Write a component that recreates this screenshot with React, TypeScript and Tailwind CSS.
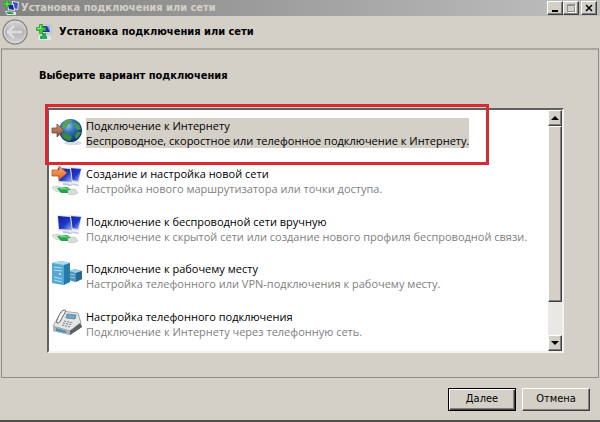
import type { ReactNode } from "react";

const raised =
  "bg-[#d4d0c8] border border-t-white border-l-white border-r-[#404040] border-b-[#404040] shadow-[inset_-1px_-1px_0_#808080]";

function Globe() {
  return (
    <svg viewBox="0 0 32 28" className="h-7 w-8 shrink-0" aria-hidden="true">
      <defs>
        <radialGradient id="globe" cx="0.4" cy="0.3" r="0.75">
          <stop offset="0" stopColor="#8ac4ea" />
          <stop offset="0.4" stopColor="#2d6fb8" />
          <stop offset="1" stopColor="#0c2c6c" />
        </radialGradient>
        <linearGradient id="brown" x1="0" y1="0" x2="0" y2="1">
          <stop offset="0" stopColor="#d09a80" />
          <stop offset="1" stopColor="#8c4a30" />
        </linearGradient>
      </defs>
      <ellipse cx="22" cy="25" rx="9" ry="2" fill="#d8dce0" />
      <circle cx="19.500" cy="12.500" r="11.500" fill="url(#globe)" />
      <path d="M13 4c2-2 6-3 8-2l-1 3-3 1-1 3-4 2-2-1z" fill="#57a05a" />
      <path d="M24 4l4 3 2 4-3 1-3-2-1-3z" fill="#4b9458" />
      <path d="M12 15l6 1 3 3-2 4-4-1-4-4z" fill="#378a3e" />
      <path d="M26 14l4 0-2 4-3 3-1-3z" fill="#3f914a" />
      <path d="M1 10h5V6l7 6.500L6 19v-4H1z" fill="url(#brown)" stroke="#7c4732" strokeWidth="0.800" />
    </svg>
  );
}

function Monitors({ arrow = false }: { arrow?: boolean }) {
  return (
    <svg viewBox="0 0 32 32" className="h-8 w-8 shrink-0" aria-hidden="true">
      <defs>
        <linearGradient id="screen" x1="0" y1="0" x2="1" y2="1">
          <stop offset="0" stopColor="#0c1c9c" />
          <stop offset="0.550" stopColor="#2038c8" />
          <stop offset="1" stopColor="#a8bcf4" />
        </linearGradient>
        <linearGradient id="orange" x1="0" y1="0" x2="0" y2="1">
          <stop offset="0" stopColor="#ffb070" />
          <stop offset="1" stopColor="#e0641c" />
        </linearGradient>
      </defs>
      <path d="M18 1l13 1-3 15-8-1z" fill="#d9dfe8" />
      <path d="M18 2l12 1-3 12-7-1z" fill="url(#screen)" />
      <path d="M20 17l7 1 1 2-8-1z" fill="#c9ced6" />
      <path d="M6 1l14 1 2 16-15-1z" fill="#e3e8ef" />
      <path d="M7 2l12 1 2 13-13-1z" fill="url(#screen)" />
      <path d="M12 17l7 1 2 2-9-1z" fill="#bcc4cf" />
      <path d="M1 21l6-1 5 3-2 3-6-1z" fill="#dce2df" stroke="#b3bcb6" strokeWidth="0.500" />
      <path d="M6 22l10-1 5 3-2 3-9 0z" fill="#22a547" />
      <path d="M8 22l8 0 2 1.500-8 0z" fill="#6cd486" />
      <path d="M17 24l7-1 3 4-5 2-5-1z" fill="#d5dcda" stroke="#aab3b0" strokeWidth="0.500" />
      {arrow && <path d="M1 4h7V0l8 7-8 7v-4H1z" fill="url(#orange)" stroke="#a8592c" strokeWidth="0.800" />}
    </svg>
  );
}

function Servers() {
  return (
    <svg viewBox="0 0 32 28" className="h-7 w-8 shrink-0" aria-hidden="true">
      <path d="M18 10l6-2 7 2v8l-7 3-6-2z" fill="#4a93bb" />
      <path d="M18 10l6-2 7 2-6 2z" fill="#9bd0e6" />
      <path d="M25 12l6-2v8l-6 3z" fill="#27688f" />
      <path d="M19 13l5 1M19 16l5 1" stroke="#a7d6e9" strokeWidth="0.800" />
      <path d="M1 2l9-2 9 2v19l-7 3-11-2z" fill="#55a9d2" />
      <path d="M1 2l9-2 9 2-6 2z" fill="#a9dcef" />
      <path d="M13 4l6-2v19l-6 3z" fill="#287ba8" />
      <path d="M3 6l8 1M3 9l8 1M3 16l8 2M3 19l8 2" stroke="#b5e2f2" strokeWidth="0.900" />
      <circle cx="9" cy="13" r="1" fill="#d6f3fb" />
    </svg>
  );
}

function Fax() {
  return (
    <svg viewBox="0 0 32 28" className="h-7 w-8 shrink-0" aria-hidden="true">
      <path d="M2 18L11 3l16 2 4 13-12 8-17-4z" fill="#8c9092" />
      <path d="M2 17L11 2l16 2 3 10-11 8z" fill="#e4e6e6" stroke="#85898b" strokeWidth="0.700" />
      <path d="M19 22l10-8 2 4-12 8z" fill="#5c6062" />
      <path d="M2 17l17 5v4L2 22z" fill="#aeb4b7" />
      <path d="M5 19l10 3v2L5 22z" fill="#4b93b4" />
      <path d="M6 14C4 13 10 1 13 1c3 0 1 3-1 6s-3 8-6 7z" fill="#f5f6f6" stroke="#4e5254" strokeWidth="0.900" />
      <path d="M16 5l9 1-1 4-9-1z" fill="#65a9cf" stroke="#596469" strokeWidth="0.600" />
      <path d="M13 12l9 2M12 14l9 2M11 16l8 2" stroke="#767b7e" strokeWidth="1" strokeDasharray="2 1" />
    </svg>
  );
}

function NetworkPlus() {
  return (
    <svg viewBox="0 0 16 16" className="size-4 shrink-0" aria-hidden="true">
      <path d="M6 1h9v8H6z" fill="#e3e6ea" stroke="#9aa3ae" strokeWidth="0.500" />
      <path d="M7 2h7v6H7z" fill="#2038a8" />
      <path d="M11 2h3v6z" fill="#8ea7e6" />
      <path d="M6 9h4v3H6z" fill="#2ca95c" />
      <path d="M2 12h13v4H2z" fill="#dfe9e2" />
      <path d="M4 12h7v3H4z" fill="#23ad58" />
      <path d="M3.500 0.500h3v3h3v3h-3v3h-3v-3h-3v-3h3z" fill="#3fcb38" stroke="#22962a" strokeWidth="0.700" />
      <path d="M4.500 1.500v3h-3" stroke="#a5f391" fill="none" strokeWidth="0.800" />
    </svg>
  );
}

function TitleIcon() {
  return (
    <svg viewBox="0 0 16 16" className="size-4 shrink-0" aria-hidden="true">
      <path d="M9 1l7 1-1 8-6-1z" fill="#dbe2ee" />
      <path d="M10 2l5 1-1 6-4-1z" fill="#2f4fc8" />
      <path d="M4 3l7 1 1 7-7-1z" fill="#dfe5ee" />
      <path d="M5 4l5 1 1 5-5-1z" fill="#1328a0" />
      <path d="M2 11l11 1v3H4z" fill="#dce5df" />
      <path d="M3 12l6 0 2 2H5z" fill="#1fa346" />
      <path d="M3 0h2v3h3v2H5v3H3V5H0V3h3z" fill="#57e64b" stroke="#1c8a25" strokeWidth="0.600" />
    </svg>
  );
}

const options: { title: string; text: string; icon: ReactNode }[] = [
  {
    title: "Подключение к Интернету",
    text: "Беспроводное, скоростное или телефонное подключение к Интернету.",
    icon: <Globe />,
  },
  {
    title: "Создание и настройка новой сети",
    text: "Настройка нового маршрутизатора или точки доступа.",
    icon: <Monitors arrow />,
  },
  {
    title: "Подключение к беспроводной сети вручную",
    text: "Подключение к скрытой сети или создание нового профиля беспроводной связи.",
    icon: <Monitors />,
  },
  {
    title: "Подключение к рабочему месту",
    text: "Настройка телефонного или VPN-подключения к рабочему месту.",
    icon: <Servers />,
  },
  {
    title: "Настройка телефонного подключения",
    text: "Подключение к Интернету через телефонную сеть.",
    icon: <Fax />,
  },
];

export default function App() {
  return (
    <div className="flex h-screen flex-col border-b-2 border-[#505050] bg-[#d4d0c8] font-['DejaVu_Sans_Condensed','DejaVu_Sans',sans-serif] text-[11px] text-black">
      <header className="flex h-4 shrink-0 items-center gap-0.5 bg-linear-to-r from-[#828282] to-[#c0c0c0] px-[3px]">
        <TitleIcon />
        <span className="font-bold text-[#d4d0c8]">Установка подключения или сети</span>
        <div className="ml-auto flex">
          <button aria-label="Свернуть" className={`flex h-3.5 w-4 items-end justify-center pb-0.5 ${raised}`}>
            <span className="h-0.5 w-1.5 bg-black" />
          </button>
          <button aria-label="Развернуть" disabled className={`flex h-3.5 w-4 items-center justify-center ${raised}`}>
            <span className="h-2 w-2 border border-t-2 border-[#909090] shadow-[1px_1px_0_white]" />
          </button>
          <button aria-label="Закрыть" className={`ml-0.5 flex h-3.5 w-4 items-center justify-center ${raised}`}>
            <svg viewBox="0 0 8 8" className="size-2" aria-hidden="true">
              <path d="M1 1l6 6M7 1L1 7" stroke="black" strokeWidth="1.500" />
            </svg>
          </button>
        </div>
      </header>

      <div className="flex h-8 shrink-0 items-center pl-0.5">
        <button aria-label="Назад" disabled>
          <svg viewBox="0 0 26 26" className="size-6.5" aria-hidden="true">
            <defs>
              <linearGradient id="back" x1="0" y1="0" x2="0" y2="1">
                <stop offset="0" stopColor="#d8d8d8" />
                <stop offset="0.500" stopColor="#b4b4b4" />
                <stop offset="1" stopColor="#d6d6d6" />
              </linearGradient>
            </defs>
            <circle cx="13" cy="13" r="12" fill="url(#back)" stroke="#8b8b89" strokeWidth="1.500" />
            <circle cx="13" cy="13" r="10.800" fill="none" stroke="#e2e2e2" strokeWidth="0.800" />
            <path d="M12 7l-6 6 6 6M7 13h13" fill="none" stroke="#dedede" strokeWidth="2.500" />
          </svg>
        </button>
        <span className="ml-2 flex">
          <NetworkPlus />
        </span>
        <h1 className="ml-[7px] font-bold">Установка подключения или сети</h1>
      </div>

      <main className="mx-px flex min-h-0 flex-1 flex-col border border-t-2 border-[#8c8c8a] border-t-[#aaa7a0] pt-4.5 pr-[34px] pb-6 pl-[45px]">
        <h2 className="-ml-2 leading-4 font-bold">Выберите вариант подключения</h2>
        <div className="relative mt-6 flex min-h-0 flex-1 border-2 border-t-[#606060] border-r-[#f4f2ee] border-b-[#f4f2ee] border-l-[#606060] bg-white">
          <ul className="flex min-w-0 flex-1 flex-col justify-between pt-2 pb-2.5 font-['Open_Sans',sans-serif] leading-[15px]">
            {options.map((option, index) => (
              <li key={option.title} className="h-8">
                <button className="flex w-full items-start gap-[3px] pl-0.5 text-left">
                  {option.icon}
                  <span className={index === 0 ? "bg-[#d4d0c8] whitespace-nowrap" : "whitespace-nowrap"}>
                    <span className="block">{option.title}</span>
                    <span className={index === 0 ? "block" : "block text-[#808080]"}>{option.text}</span>
                  </span>
                </button>
              </li>
            ))}
          </ul>
          <div className="flex w-3.5 shrink-0 flex-col bg-[#eae8e4]">
            <button aria-label="Вверх" className={`flex h-4 items-center justify-center ${raised}`}>
              <span className="border-x-4 border-b-4 border-x-transparent border-b-black" />
            </button>
            <div className={`h-44 ${raised}`} />
            <button aria-label="Вниз" className={`mt-auto flex h-4 items-center justify-center ${raised}`}>
              <span className="border-x-4 border-t-4 border-x-transparent border-t-black" />
            </button>
          </div>
          <div className="pointer-events-none absolute -top-1.5 right-[73px] -left-1 h-[61px] border-3 border-[#dc2830]" />
        </div>
      </main>

      <footer className="flex h-[42px] shrink-0 items-center justify-end gap-1.5 pr-2.5">
        <button className="h-[23px] w-[68px] border border-black bg-[#d4d0c8] shadow-[inset_1px_1px_0_white,inset_-1px_-1px_0_#404040,inset_-2px_-2px_0_#808080]">
          Далее
        </button>
        <button className={`h-[23px] w-[68px] ${raised}`}>Отмена</button>
      </footer>
    </div>
  );
}
